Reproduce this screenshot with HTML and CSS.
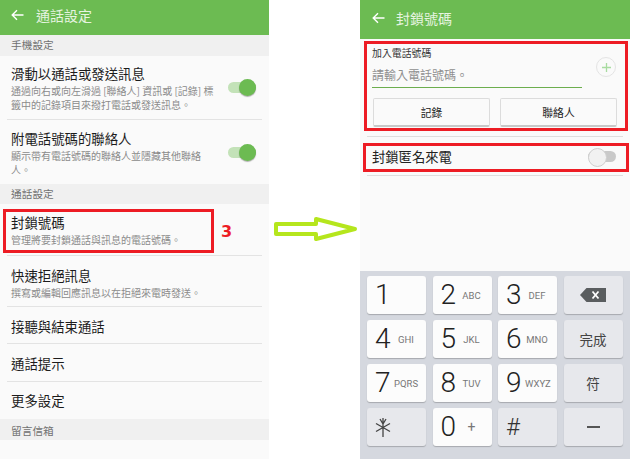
FILE: index.html
```html
<!DOCTYPE html>
<html lang="zh-Hant">
<head>
<meta charset="utf-8">
<title>封鎖號碼</title>
<link rel="stylesheet" href="styles.css">
</head>
<body>
<main class="page">
  <section class="phone left">
    <header class="bar bar-left">
      <svg class="back" width="13" height="12" viewBox="0 0 13 12"><path d="M12.5 6H1.5M6 1.2 1.2 6 6 10.8" fill="none" stroke="#fff" stroke-width="1.4"/></svg>
      <span>通話設定</span>
    </header>
    <div class="section s1">手機設定</div>
    <div class="row toggle-row r1">
      <div class="text"><div class="title">滑動以通話或發送訊息</div><div class="sub">通過向右或向左滑過 [聯絡人] 資訊或 [記錄] 標<br>籤中的記錄項目來撥打電話或發送訊息。</div></div>
      <div class="switch on"></div>
    </div>
    <div class="row toggle-row r2 last">
      <div class="text"><div class="title">附電話號碼的聯絡人</div><div class="sub">顯示帶有電話號碼的聯絡人並隱藏其他聯絡<br>人。</div></div>
      <div class="switch on"></div>
    </div>
    <div class="section s2">通話設定</div>
    <div class="row r3"><div class="title">封鎖號碼</div><div class="sub">管理將要封鎖通話與訊息的電話號碼。</div></div>
    <div class="row r4"><div class="title">快速拒絕訊息</div><div class="sub">撰寫或編輯回應訊息以在拒絕來電時發送。</div></div>
    <div class="row r5"><div class="title">接聽與結束通話</div></div>
    <div class="row r6"><div class="title">通話提示</div></div>
    <div class="row r7 last"><div class="title">更多設定</div></div>
    <div class="section s3">留言信箱</div>
    <div class="mark mark-left"></div>
    <div class="step">3</div>
  </section>

  <div class="gutter">
    <svg width="85" height="26" viewBox="0 0 85 26"><path d="M2 8H42V3L81 13 42 23V18H2Z" fill="#fff" stroke="#b5e61d" stroke-width="4" stroke-linejoin="round"/></svg>
  </div>

  <section class="phone right">
    <header class="bar bar-right">
      <svg class="back" width="13" height="12" viewBox="0 0 13 12"><path d="M12.5 6H1.5M6 1.2 1.2 6 6 10.8" fill="none" stroke="#fff" stroke-width="1.4"/></svg>
      <span>封鎖號碼</span>
    </header>
    <div class="form">
      <div class="label">加入電話號碼</div>
      <div class="input-line">
        <div class="input">請輸入電話號碼。</div>
        <div class="add"><svg width="11" height="11" viewBox="0 0 11 11"><path d="M5.500 1v9M1 5.500h9" stroke="#a8dca0" stroke-width="1.300"/></svg></div>
      </div>
      <div class="buttons"><div class="btn">記錄</div><div class="btn">聯絡人</div></div>
    </div>
    <div class="anon">
      <span>封鎖匿名來電</span>
      <div class="switch off"></div>
    </div>
    <div class="spacer"></div>
    <div class="keypad">
      <div class="key"><b>1</b></div>
      <div class="key"><b>2</b><i>ABC</i></div>
      <div class="key"><b>3</b><i>DEF</i></div>
      <div class="key fn center"><svg width="26" height="14" viewBox="0 0 26 14"><path d="M6.500 0H26V14H6.500L0 7Z" fill="#5a5d5f"/><path d="M12.500 3.500l6 7M18.500 3.500l-6 7" stroke="#fff" stroke-width="1.800"/></svg></div>
      <div class="key"><b>4</b><i>GHI</i></div>
      <div class="key"><b>5</b><i>JKL</i></div>
      <div class="key"><b>6</b><i>MNO</i></div>
      <div class="key fn center word">完成</div>
      <div class="key"><b>7</b><i>PQRS</i></div>
      <div class="key"><b>8</b><i>TUV</i></div>
      <div class="key"><b>9</b><i>WXYZ</i></div>
      <div class="key fn center word">符</div>
      <div class="key fn"><svg class="star" width="16" height="19" viewBox="0 0 16 19"><path d="M8 0v19M5 1 8 6 11 1M1 5.500 15 13.500M15 5.500 1 13.500" fill="none" stroke="#444" stroke-width="1.300"/></svg></div>
      <div class="key"><b>0</b><i class="plus">+</i></div>
      <div class="key fn hash">#</div>
      <div class="key fn center"><span class="dash"></span></div>
    </div>
    <div class="mark mark-form"></div>
    <div class="mark mark-anon"></div>
  </section>
</main>
</body>
</html>
```

FILE: styles.css
```css
* { box-sizing: border-box; }
html, body { margin: 0; padding: 0; background: #fff; }
body { font-family: "Noto Sans CJK TC", "Noto Sans", sans-serif; color: #1c1c1c; }
.page { display: flex; width: 630px; height: 459px; overflow: hidden; }
.phone { position: relative; height: 459px; background: #fafafa; display: flex; flex-direction: column; }
.left { width: 269px; flex: none; }
.right { width: 270px; flex: none; }
.gutter { width: 91px; flex: none; padding: 216px 0 0 5px; }
.gutter svg { display: block; }

.bar { flex: none; display: flex; align-items: center; background: #6cbb52; color: #e6f4e0; font-size: 14px; line-height: 20px; }
.bar-left { height: 35px; padding: 0 0 6px 11px; }
.bar-left .back { margin-right: 12px; }
.bar-right { height: 39px; padding: 0 0 4px 12px; }
.bar-right .back { margin-right: 11px; }

.section { flex: none; background: #f0f0f0; color: #707070; font-size: 10.7px; line-height: 14px; padding: 3px 0 0 11px; }
.s1 { height: 21px; }
.s2 { height: 20px; }
.s3 { height: 21px; padding-top: 5px; }

.row { flex: none; margin: 0 7px; padding: 0 4px; border-bottom: 1px solid #e3e3e3; }
.row.last { border-bottom: 0; }
.toggle-row { display: flex; justify-content: space-between; align-items: center; padding-right: 6px; }
.text { width: 206px; white-space: nowrap; }
.title { font-size: 13.4px; line-height: 18px; color: #1c1c1c; }
.sub { font-size: 10px; line-height: 13.500px; color: #8b8b8b; margin-top: 2px; }
.r1 { height: 64px; }
.r2 { height: 64px; padding-top: 1px; }
.r3 { height: 52px; padding-top: 9px; }
.r4 { height: 51px; padding-top: 10px; }
.r5 { height: 37px; padding-top: 10px; }
.r6 { height: 38px; padding-top: 10px; }
.r7 { height: 37px; padding-top: 9px; }

.switch { position: relative; width: 28px; height: 11px; border-radius: 6px; flex: none; }
.switch::after { content: ""; position: absolute; top: -3px; width: 17px; height: 17px; border-radius: 50%; }
.switch.on { background: #c3e2b8; }
.switch.on::after { right: 0; background: #6cbb52; box-shadow: 0 1px 1px rgba(0,0,0,.3); }
.switch.off { background: #c9c9c9; }
.switch.off::after { left: 0; background: #f1f1f1; border: 1px solid #cfcfcf; }

.form { flex: none; height: 98px; margin: 0 7px; padding: 7px 0 0; border-bottom: 1px solid #dedede; }
.label { font-size: 9.900px; line-height: 14px; color: #333; margin-left: 5px; }
.input-line { display: flex; align-items: flex-start; margin-top: 1px; margin-left: 5px; }
.input { width: 210px; height: 27px; padding-top: 4px; border-bottom: 1px solid #6cae4e; font-size: 12px; line-height: 19px; color: #8f8f8f; }
.add { width: 20px; height: 20px; margin: -4px 0 0 14px; border: 1px solid #e4e4e4; border-radius: 50%; display: flex; align-items: center; justify-content: center; }
.add svg { display: block; }
.buttons { display: flex; gap: 10px; margin: 10px 6px 0; }
.btn { width: 117px; height: 29px; background: #fafafa; border: 1px solid #dcdcdc; border-bottom: 2px solid #c8c8c8; border-radius: 2px; text-align: center; font-size: 10.800px; line-height: 27px; color: #222; }
.anon { flex: none; height: 39px; margin: 0 7px; padding: 0 7px 0 5px; display: flex; align-items: center; justify-content: space-between; border-bottom: 1px solid #dedede; font-size: 13.300px; color: #222; }
.spacer { flex: 1; background: #fafafa; }
.keypad { flex: none; height: 188px; background: #d5d8df; padding: 5px 7px 0; display: grid; grid-template-columns: repeat(4, 59px); grid-template-rows: repeat(4, 38px); column-gap: 6.500px; row-gap: 6px; }
.key { display: flex; align-items: center; padding-left: 8px; background: #fcfcfc; border-radius: 3px; box-shadow: 0 1px 1px rgba(0,0,0,.22); font-family: Roboto, sans-serif; }
.key b { width: 14px; text-align: center; font-weight: 300; font-size: 28px; line-height: 30px; color: #222; }
.key i { width: 24px; margin-left: 5px; font-style: normal; font-size: 9.500px; color: #777; text-align: center; white-space: nowrap; }
.key i.plus { font-size: 14px; }
.key.fn { background: #e7e8ec; }
.key.center { justify-content: center; padding-left: 0; }
.word { font-family: "Noto Sans CJK TC", sans-serif; font-size: 13.500px; color: #444; }
.star { display: block; }
.hash { font-size: 24px; font-weight: 300; color: #333; }
.dash { width: 13px; height: 2.500px; background: #555; }

.mark { position: absolute; border: 3px solid #ed1c24; }
.mark-left { left: 3px; top: 209px; width: 211px; height: 44px; }
.mark-form { left: 4px; top: 41px; width: 264px; height: 90px; }
.mark-anon { left: 3px; top: 143px; width: 266px; height: 29px; }
.step { position: absolute; left: 221px; top: 222px; color: #ed1c24; font: 700 16px/20px "DejaVu Sans", sans-serif; }
```
